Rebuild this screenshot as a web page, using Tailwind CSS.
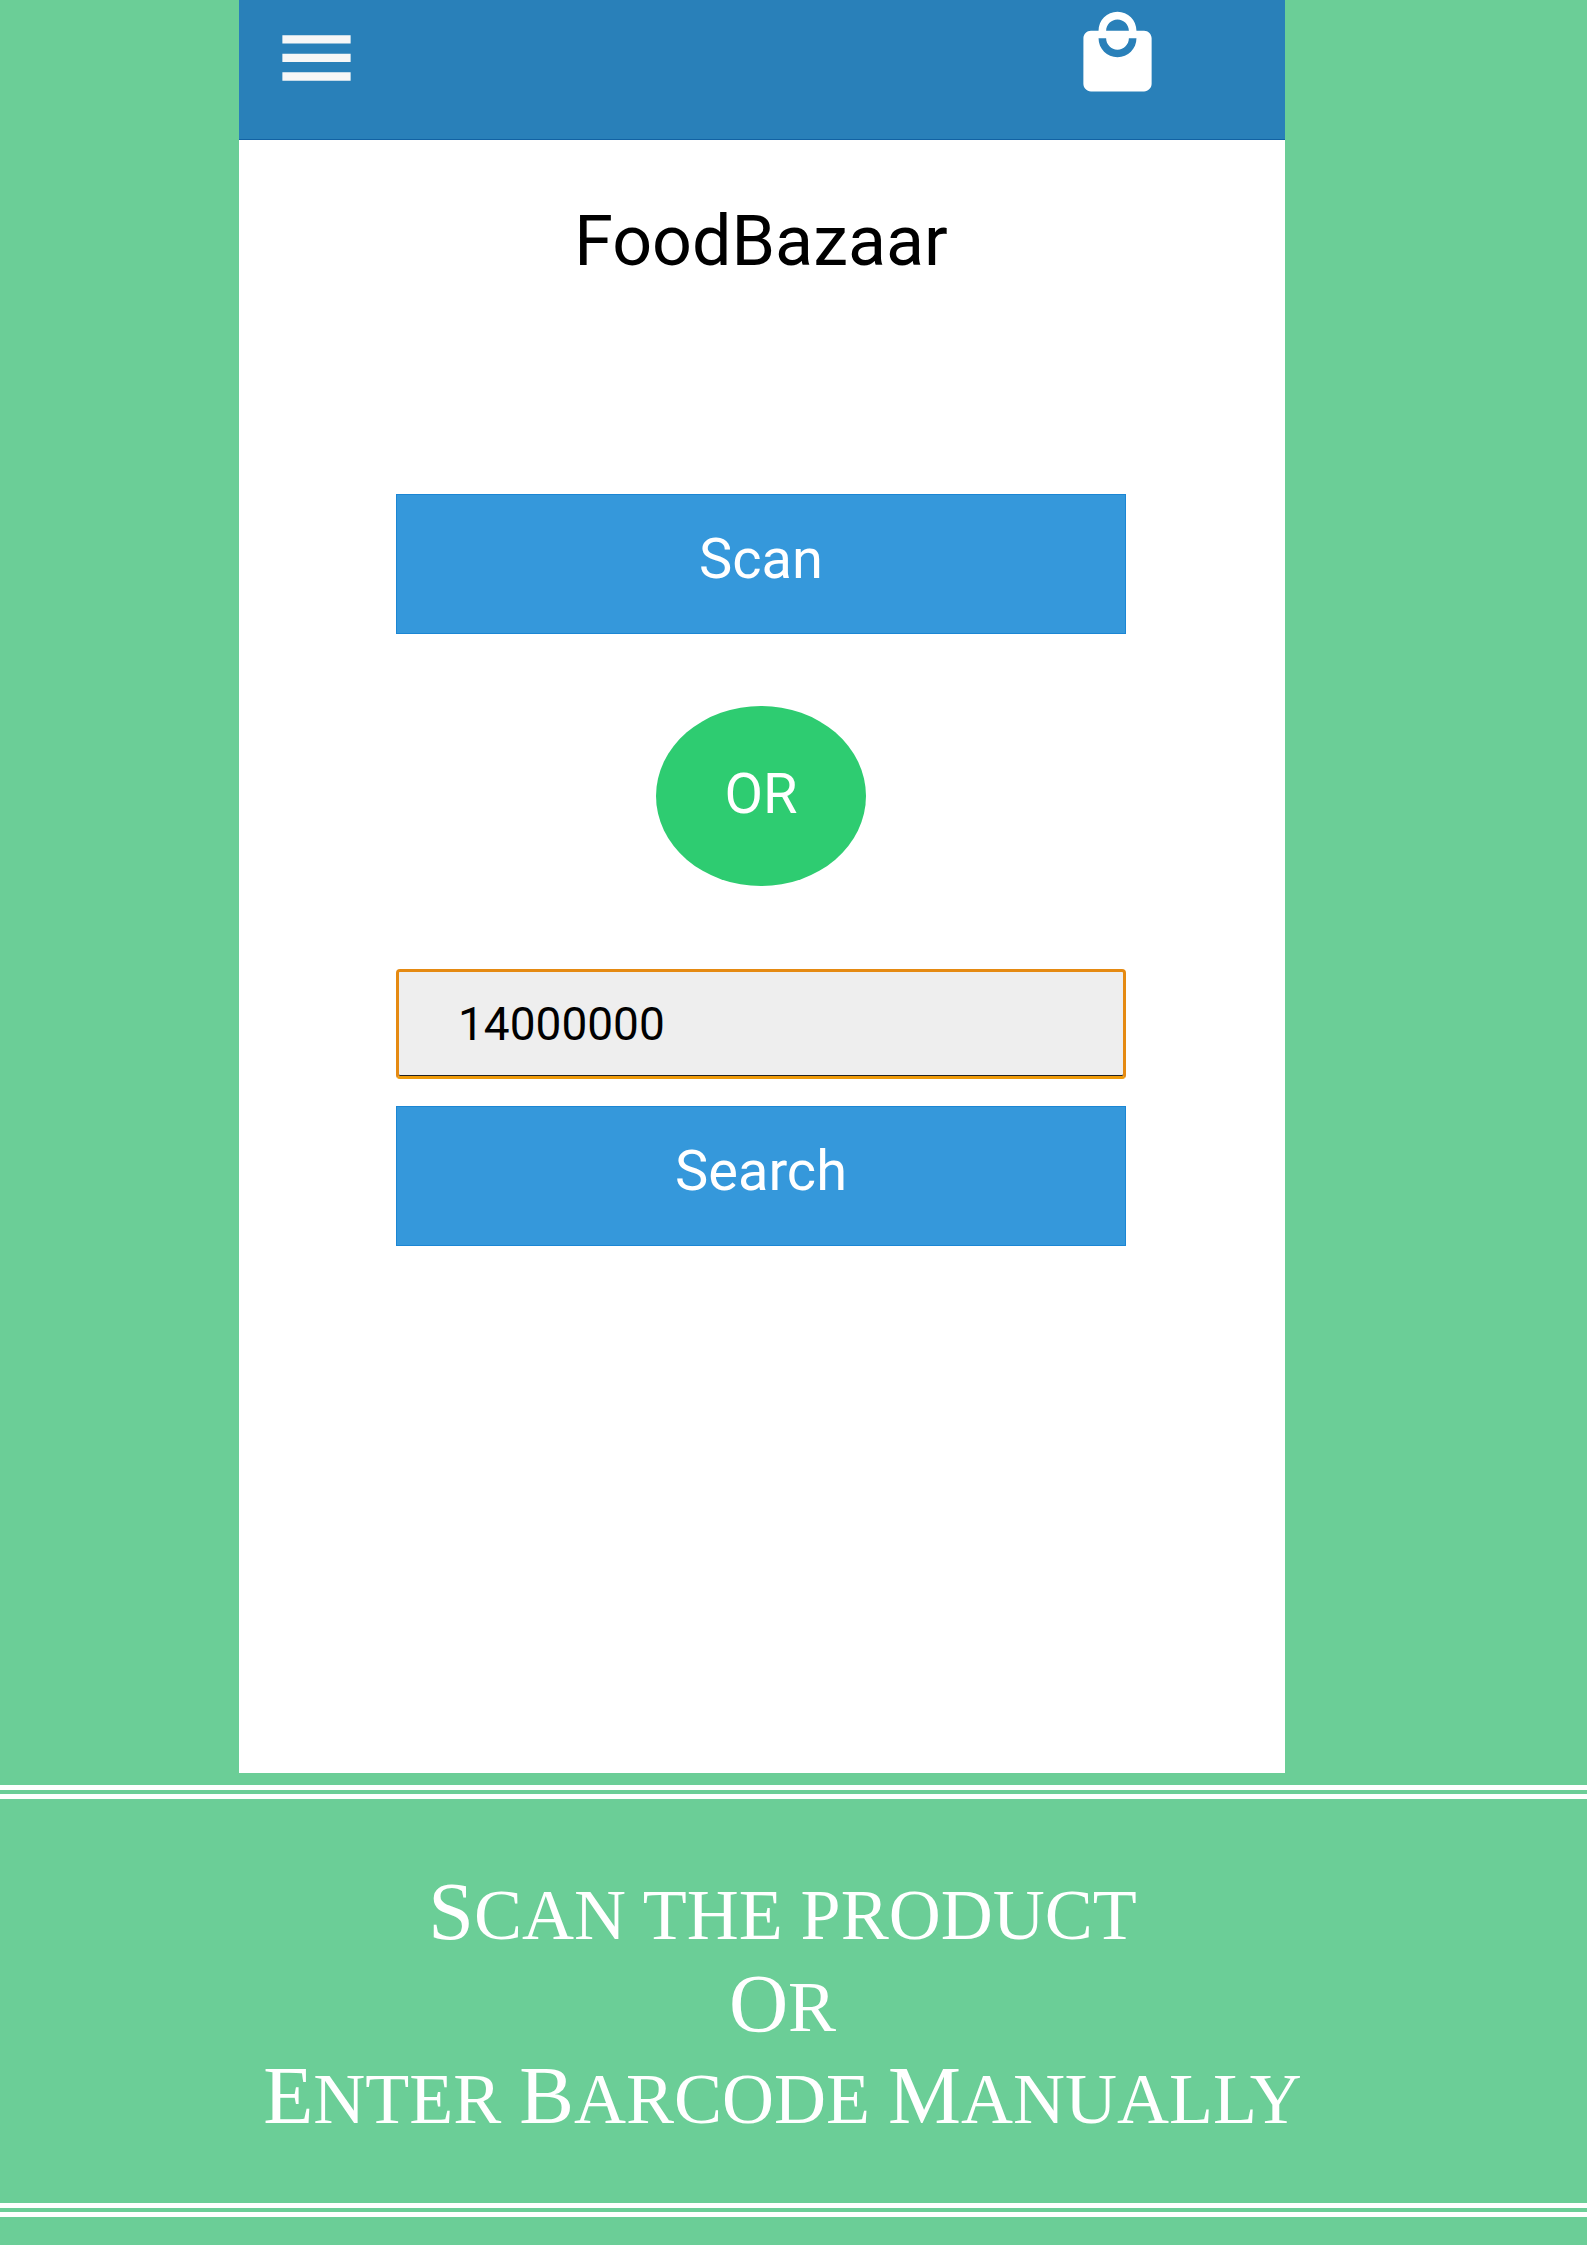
<!DOCTYPE html>
<html lang="en">
<head>
<meta charset="utf-8">
<meta name="viewport" content="width=device-width, initial-scale=1">
<title>FoodBazaar</title>
<script src="https://cdn.jsdelivr.net/npm/@tailwindcss/browser@4"></script>
</head>
<body class="min-h-screen bg-[#6bce97] font-['Roboto',sans-serif]">
  <div class="pr-[302px] pl-[239px]">
    <div class="bg-white">
      <header class="flex h-[140px] items-start justify-between border-b border-[#1262a3] bg-[#2980b9] pr-[122px] pl-8">
        <button type="button" aria-label="Menu" class="mt-3 text-[#f7f7f7]">
          <svg class="size-[91px]" viewBox="0 0 24 24" fill="currentColor" aria-hidden="true"><path d="M3 18.1h18v-2.2H3v2.2zm0-4.9h18V11H3v2.200zm0-7.100v2.200h18V6.100H3z"/></svg>
        </button>
        <a href="#" aria-label="Shopping bag" class="mt-2 text-white">
          <svg class="size-[91px]" viewBox="0 0 24 24" fill="currentColor" aria-hidden="true"><path d="M19 6h-2c0-2.76-2.24-5-5-5S7 3.24 7 6H5c-1.1 0-1.99.9-1.99 2L3 20c0 1.1.9 2 2 2h14c1.1 0 2-.9 2-2V8c0-1.1-.9-2-2-2zm-7-3c1.66 0 3 1.34 3 3H9c0-1.66 1.34-3 3-3zm0 10c-2.76 0-5-2.24-5-5h2c0 1.66 1.34 3 3 3s3-1.34 3-3h2c0 2.76-2.24 5-5 5z"/></svg>
        </a>
      </header>
      <main class="flex flex-col pt-[61px] pr-[159px] pb-[527px] pl-[157px]">
        <h1 class="text-center text-[70px] leading-[80px] text-black">FoodBazaar</h1>
        <button type="button" class="mt-[213px] h-[140px] border border-[#1b86d4] bg-[#3598db] pb-2.5 text-[56px] text-white">Scan</button>
        <div class="mt-[72px] flex h-[180px] w-[210px] items-center justify-center self-center rounded-[50%] bg-[#2ecc71] pb-1 text-[56px] text-white">OR</div>
        <form class="mt-[83px] flex flex-col gap-[27px]">
          <input type="text" aria-label="Barcode" value="14000000" class="h-[110px] w-full rounded-sm border-3 border-[#e58a12] border-b-[#ee9a08] bg-[#eeeeee] px-[59px] text-[46px] text-black shadow-[inset_0_-1px_0_#222] outline-none">
          <button type="button" class="h-[140px] border border-[#1b86d4] bg-[#3598db] pb-2.5 text-[56px] text-white">Search</button>
        </form>
      </main>
    </div>
  </div>
  <section class="mt-3 mb-7 border-y-14 border-double border-white pt-[70px] pr-[22px] pb-[58px] text-center font-['Liberation_Serif',serif] text-[72px] leading-[92px] text-white uppercase">
    <p><span class="inline-block first-letter:text-[82px] first-letter:leading-none">Scan</span> the product</p>
    <p><span class="inline-block first-letter:text-[82px] first-letter:leading-none">Or</span></p>
    <p><span class="inline-block first-letter:text-[82px] first-letter:leading-none">Enter</span> <span class="inline-block first-letter:text-[82px] first-letter:leading-none">Barcode</span> <span class="inline-block first-letter:text-[82px] first-letter:leading-none">Manually</span></p>
  </section>
</body>
</html>
